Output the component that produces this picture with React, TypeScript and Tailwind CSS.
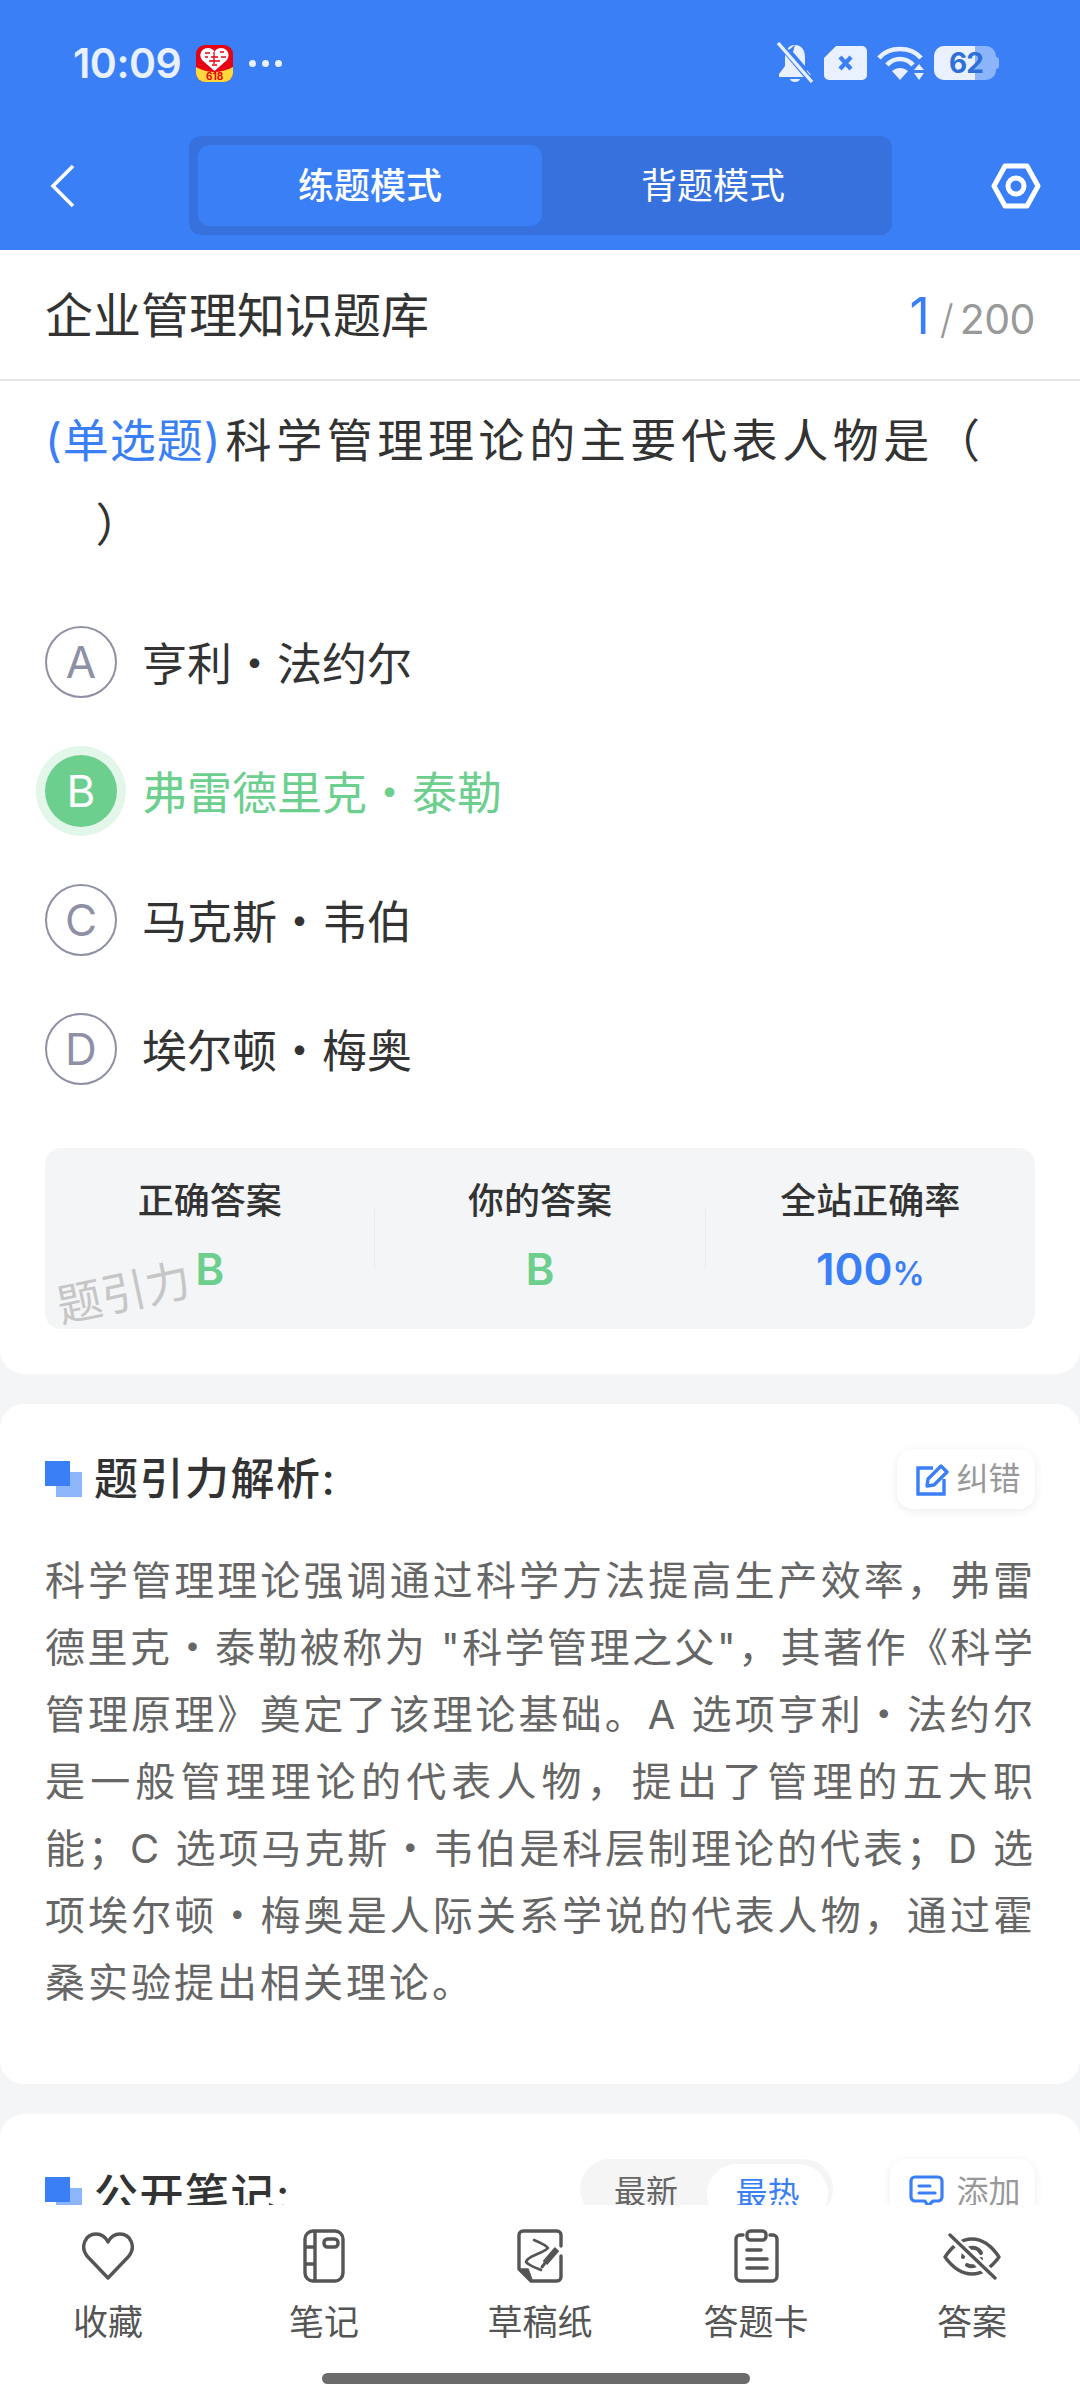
import React from "react";

const BLUE = "#3b7ff7";

const options = [
  { key: "A", text: "亨利・法约尔" },
  { key: "B", text: "弗雷德里克・泰勒", picked: true },
  { key: "C", text: "马克斯・韦伯" },
  { key: "D", text: "埃尔顿・梅奥" },
];

const analysis = [
  "科学管理理论强调通过科学方法提高生产效率，弗雷",
  "德里克・泰勒被称为 \"科学管理之父\"，其著作《科学",
  "管理原理》奠定了该理论基础。A 选项亨利・法约尔",
  "是一般管理理论的代表人物，提出了管理的五大职",
  "能；C 选项马克斯・韦伯是科层制理论的代表；D 选",
  "项埃尔顿・梅奥是人际关系学说的代表人物，通过霍",
];

const MallIcon = () => (
  <div className="relative h-[37px] w-[37px] overflow-hidden rounded-[9px] bg-[#e60012]">
    <svg viewBox="0 0 37 37" className="absolute inset-0 h-full w-full">
      <path d="M0 22 Q18 32 37 22 V37 H0 Z" fill="#ffd93b" />
      <path d="M18.5 26 L6 15 C2 9 6 3 12 3 C15 3 17 4 18.5 7 C20 4 22 3 25 3 C31 3 35 9 31 15 Z" fill="#fff" />
      <path d="M9 8 h5 M9 12 h3 M15 12 h7 M18 7 v12 M24 7 h4 M25 12 h5 M13 16 h11 M16 20 h5" stroke="#e60012" strokeWidth="1.3" fill="none" />
    </svg>
    <span className="absolute inset-x-0 bottom-[1px] text-center text-[10px] font-bold leading-[10px] text-[#e60012]">618</span>
  </div>
);

const BellOff = () => (
  <svg width="38" height="42" viewBox="0 0 38 42" fill="#e9f0ff">
    <path d="M19 3 C12 3 9 9 9 15 V24 L3 32 V35 H29 L9 11 Z" />
    <path d="M19 3 C26 3 29 9 29 15 V24 L17 10 Z M31 28 L35 33 L31 33 Z" />
    <path d="M14 37 H24 C23 41 15 41 14 37 Z" />
    <path d="M3 1 L36 40" stroke={BLUE} strokeWidth="6" />
    <path d="M2 1 L36 40" stroke="#e9f0ff" strokeWidth="3.4" />
  </svg>
);

const SimOff = () => (
  <svg width="43" height="34" viewBox="0 0 43 34">
    <path d="M12 0 H38 A5 5 0 0 1 43 5 V29 A5 5 0 0 1 38 34 H5 A5 5 0 0 1 0 29 V12 Z" fill="#e9f0ff" />
    <path d="M16 11 L27 23 M27 11 L16 23" stroke={BLUE} strokeWidth="4.2" />
  </svg>
);

const Wifi = () => (
  <svg width="47" height="34" viewBox="0 0 47 34" fill="none" stroke="#e9f0ff" strokeWidth="4.6">
    <path d="M2 12 C12 0 34 0 44 12" />
    <path d="M10 19 C17 11 29 11 36 19" />
    <path d="M15 25 L23 34 L31 25 C26 21 20 21 15 25 Z" fill="#e9f0ff" stroke="none" />
    <path d="M37 24 L42 18 L47 24 Z M37 27 H47 L42 34 Z" fill="#e9f0ff" stroke="none" />
  </svg>
);

const Battery = () => (
  <div className="relative flex h-[34px] w-[65px] items-center">
    <div className="absolute left-0 top-0 h-full w-[62px] rounded-[10px] bg-[#8cb4fb]" />
    <div className="absolute left-0 top-0 h-full w-[41px] rounded-l-[10px] bg-[#e9f0ff]" />
    <div className="absolute right-0 top-[11px] h-[12px] w-[4px] rounded-r-[3px] bg-[#8cb4fb]" />
    <span className="absolute left-[15px] top-0 text-[28px] font-bold leading-[34px] tracking-[-1px] text-[#2f6fd8]">62</span>
  </div>
);

const StackMark = () => (
  <div className="relative h-[36px] w-[37px] shrink-0">
    <div className="absolute bottom-0 right-0 h-[25px] w-[26px] bg-[#8db6fa]" />
    <div className="absolute left-0 top-0 h-[25px] w-[25px] bg-[#3b7ff7]" />
  </div>
);

const EditIcon = () => (
  <svg width="33" height="33" viewBox="0 0 33 33" fill="none" stroke={BLUE} strokeWidth="3.4">
    <path d="M17 5 H2 V31 H28 V16" />
    <path d="M11 23 L12 16 L25 3 L31 9 L18 22 Z" strokeLinejoin="round" />
  </svg>
);

const CommentIcon = () => (
  <svg width="35" height="34" viewBox="0 0 35 34" fill="none" stroke={BLUE} strokeWidth="3.2" strokeLinecap="round">
    <path d="M6 2 H29 A4 4 0 0 1 33 6 V22 A4 4 0 0 1 29 26 H24 L19 31 L16 26 H6 A4 4 0 0 1 2 22 V6 A4 4 0 0 1 6 2 Z" strokeLinejoin="round" />
    <path d="M10 11 H21 M10 18 H26" />
  </svg>
);

const iconStroke = { stroke: "#555", strokeWidth: 3.4, fill: "none" };

const HeartIcon = () => (
  <svg width="54" height="50" viewBox="0 0 54 50" {...iconStroke} strokeLinejoin="round">
    <path d="M27 47 L6 25 C-1 16 4 3 15 3 C20 3 24 5 27 11 C30 5 34 3 39 3 C50 3 55 16 48 25 Z" />
  </svg>
);

const NotebookIcon = () => (
  <svg width="42" height="54" viewBox="0 0 42 54" {...iconStroke}>
    <rect x="2" y="2" width="38" height="50" rx="8" />
    <path d="M12 2 V52 M2 18 H12 M2 35 H12" />
    <rect x="21" y="10" width="14" height="8" rx="3.5" />
  </svg>
);

const DraftIcon = () => (
  <svg width="46" height="54" viewBox="0 0 46 54" {...iconStroke} strokeLinecap="round" strokeLinejoin="round">
    <path d="M44 17 V6 A4 4 0 0 0 40 2 H6 A4 4 0 0 0 2 6 V40 L14 52 H40 A4 4 0 0 0 44 48 V27" />
    <path d="M3 40 H11 L15 51 Z" fill="#555" strokeWidth="1.5" />
    <path d="M17 11 C24 14 30 17 31 19 C27 24 10 27 9 33 C11 36 19 39 24 41" strokeWidth="2.6" />
    <path d="M28 34 L40 20" strokeWidth="6" strokeLinecap="butt" />
    <path d="M25 38 L28 34" strokeWidth="3" />
  </svg>
);

const ClipboardIcon = () => (
  <svg width="45" height="54" viewBox="0 0 45 54" {...iconStroke} strokeLinecap="round">
    <path d="M9 6 H6 A4 4 0 0 0 2 10 V47 A5 5 0 0 0 7 52 H38 A5 5 0 0 0 43 47 V10 A4 4 0 0 0 39 6 H36" />
    <rect x="13" y="2" width="19" height="9" rx="3.5" />
    <path d="M13 21 H27 M13 30 H33 M13 39 H33" strokeWidth="3.6" />
  </svg>
);

const EyeOffIcon = () => (
  <svg width="58" height="47" viewBox="0 0 58 47" {...iconStroke} strokeLinecap="round" strokeLinejoin="round">
    <path d="M2 24 C10 12 19 6 29 6 C39 6 48 12 56 24 C48 35 39 41 29 41 C19 41 10 35 2 24 Z" />
    <path d="M20 24 A9.5 9.5 0 0 1 38 20 M38 26 A9.5 9.5 0 0 1 24 32" strokeWidth="4" />
    <path d="M7 3 L52 45" stroke="#fff" strokeWidth="9" />
    <path d="M7 2 L52 45" />
  </svg>
);

const tools = [
  { label: "收藏", icon: <HeartIcon /> },
  { label: "笔记", icon: <NotebookIcon /> },
  { label: "草稿纸", icon: <DraftIcon /> },
  { label: "答题卡", icon: <ClipboardIcon /> },
  { label: "答案", icon: <EyeOffIcon /> },
];

const Divider = () => <div className="h-[59px] w-px self-center bg-[#e9eaed]" />;

const Stat = ({ label, children }: { label: string; children: React.ReactNode }) => (
  <div className="flex flex-1 flex-col items-center gap-[18px] pt-[28px]">
    <div className="text-[36px] font-medium leading-[50px] text-[#333]">{label}</div>
    <div className="text-[44px] font-semibold leading-[50px]">{children}</div>
  </div>
);

export default function App() {
  return (
    <div className="flex h-[2400px] w-[1080px] flex-col overflow-hidden bg-[#f4f5f7] [font-family:Inter,'Noto_Sans_CJK_SC',sans-serif]">
      <header className="h-[250px] shrink-0 bg-[#3b7ff7]">
        <div className="flex h-[126px] items-center justify-between pl-[73px] pr-[81px]">
          <div className="flex items-center">
            <span className="text-[41px] font-semibold leading-none tracking-[-0.5px] text-[#e9f0ff]">10:09</span>
            <div className="ml-[15px]">
              <MallIcon />
            </div>
            <div className="ml-[16px] flex gap-[6px]">
              <span className="h-[7px] w-[7px] rounded-full bg-[#e9f0ff]" />
              <span className="h-[7px] w-[7px] rounded-full bg-[#e9f0ff]" />
              <span className="h-[7px] w-[7px] rounded-full bg-[#e9f0ff]" />
            </div>
          </div>
          <div className="flex items-center gap-[10px]">
            <BellOff />
            <SimOff />
            <Wifi />
            <Battery />
          </div>
        </div>
        <div className="mt-[10px] flex h-[99px] items-center pl-[50px]">
          <svg width="26" height="44" viewBox="0 0 26 44" fill="none" stroke="#fff" strokeWidth="3.6">
            <path d="M23 2 L3 22 L23 42" />
          </svg>
          <div className="ml-[113px] flex h-[99px] w-[703px] rounded-[12px] bg-[#3671de] p-[9px] pr-0">
            <div className="flex w-[344px] items-center justify-center rounded-[12px] bg-[#3b7ff7] text-[36px] font-medium text-white">
              练题模式
            </div>
            <div className="flex w-[342px] items-center justify-center text-[36px] text-white">背题模式</div>
          </div>
          <svg className="ml-[99px]" width="50" height="46" viewBox="0 0 50 46" fill="none" stroke="#fff" strokeWidth="5" strokeLinejoin="round">
            <path d="M14 3 H36 L47 23 L36 43 H14 L3 23 Z" />
            <circle cx="25" cy="23" r="8" />
          </svg>
        </div>
      </header>

      <div className="flex h-[131px] shrink-0 items-center justify-between border-b-2 border-[#e6e6e6] bg-white pl-[45px] pr-[45px] pt-[2px]">
        <div className="text-[48px] leading-none text-[#333]">企业管理知识题库</div>
        <div className="flex items-baseline">
          <span className="text-[50px] font-normal leading-none text-[#3b7ff7]">1</span>
          <span className="ml-[10px] text-[40px] font-light leading-none text-[#999]">/</span>
          <span className="ml-[6px] text-[41px] font-normal leading-none tracking-[-0.5px] text-[#999]">200</span>
        </div>
      </div>

      <main className="min-h-0 flex-1 overflow-hidden">
        <section className="rounded-b-[24px] bg-white px-[45px] pb-[45px] pt-[17px]">
          <div className="text-[46px] leading-[84px] tracking-[4.6px] text-[#333]">
            <span className="tracking-[1px] text-[#3b7ff7]">(单选题)</span>
            <span className="ml-[4px]">科学管理理论的主要代表人物是（</span>
            <br />
            {"　）"}
          </div>

          <div className="mt-[60px] flex flex-col gap-[57px]">
            {options.map((o) => (
              <div key={o.key} className="flex h-[72px] items-center gap-[25px]">
                <div
                  className={
                    o.picked
                      ? "flex h-[72px] w-[72px] items-center justify-center rounded-full bg-[#6ccf8e] text-[44px] text-white ring-[9px] ring-[#e2f6ea]"
                      : "flex h-[72px] w-[72px] items-center justify-center rounded-full border-2 border-[#8e90a6] text-[44px] text-[#8e90a6]"
                  }
                >
                  {o.key}
                </div>
                <div className={o.picked ? "mt-[5px] text-[45px] leading-none text-[#6ccf8e]" : "mt-[5px] text-[45px] leading-none text-[#333]"}>{o.text}</div>
              </div>
            ))}
          </div>

          <div className="relative mt-[63px] flex h-[181px] rounded-[16px] bg-[#f4f5f7]">
            <Stat label="正确答案">
              <span className="text-[#6ccf8e]">B</span>
            </Stat>
            <Divider />
            <Stat label="你的答案">
              <span className="text-[#6ccf8e]">B</span>
            </Stat>
            <Divider />
            <Stat label="全站正确率">
              <span className="text-[#3b7ff7]">
                100<span className="text-[32px]">%</span>
              </span>
            </Stat>
            <div className="absolute left-[11px] top-[122px] -rotate-[12deg] text-[45px] leading-none text-[#c6c6c6]">题引力</div>
          </div>
        </section>

        <section className="mt-[30px] rounded-[24px] bg-white px-[45px] pb-[68px] pt-[45px]">
          <div className="flex h-[60px] items-center justify-between">
            <div className="flex items-center gap-[12px]">
              <StackMark />
              <div className="text-[44px] font-medium leading-none tracking-[1.5px] text-[#333]">题引力解析:</div>
            </div>
            <div className="flex h-[60px] w-[138px] items-center justify-center gap-[7px] rounded-[16px] bg-white pl-[5px] text-[32px] text-[#999] shadow-[0_2px_10px_rgba(0,0,0,0.08)]">
              <EditIcon />
              纠错
            </div>
          </div>
          <div className="mt-[38px] text-[40px] leading-[67px] text-[#666]">
            {analysis.map((line) => (
              <div key={line} className="text-justify tracking-[2px] [text-align-last:justify]">
                {line}
              </div>
            ))}
            <div className="tracking-[3px]">桑实验提出相关理论。</div>
          </div>
        </section>

        <section className="mt-[30px] rounded-t-[24px] bg-white px-[45px] pt-[45px]">
          <div className="flex items-start">
            <div className="mt-[14px] flex items-center gap-[12px]">
              <StackMark />
              <div className="text-[44px] font-medium leading-none tracking-[1.5px] text-[#333]">公开笔记:</div>
            </div>
            <div className="ml-auto flex h-[60px] w-[253px] items-center rounded-full bg-[#f5f5f5] p-[5px] text-[32px]">
              <div className="flex w-[122px] items-center justify-center pt-[6px] text-[#666]">最新</div>
              <div className="flex h-[60px] w-[121px] items-center justify-center self-start rounded-full bg-white text-[#3b7ff7]">最热</div>
            </div>
            <div className="ml-[57px] flex h-[60px] w-[145px] items-center justify-center gap-[12px] rounded-[16px] bg-white pl-[5px] pt-[6px] text-[32px] text-[#999] shadow-[0_2px_10px_rgba(0,0,0,0.08)]">
              <CommentIcon />
              添加
            </div>
          </div>
        </section>
      </main>

      <footer className="flex h-[195px] shrink-0 flex-col bg-white">
        <div className="mt-[23px] grid grid-cols-5">
          {tools.map((t) => (
            <div key={t.label} className="flex flex-col items-center">
              <div className="flex h-[56px] items-center">{t.icon}</div>
              <div className="mt-[13px] text-[35px] leading-[50px] text-[#555]">{t.label}</div>
            </div>
          ))}
        </div>
        <div className="ml-[322px] mt-[26px] h-[11px] w-[428px] rounded-full bg-[#6b6b6b]" />
      </footer>
    </div>
  );
}
